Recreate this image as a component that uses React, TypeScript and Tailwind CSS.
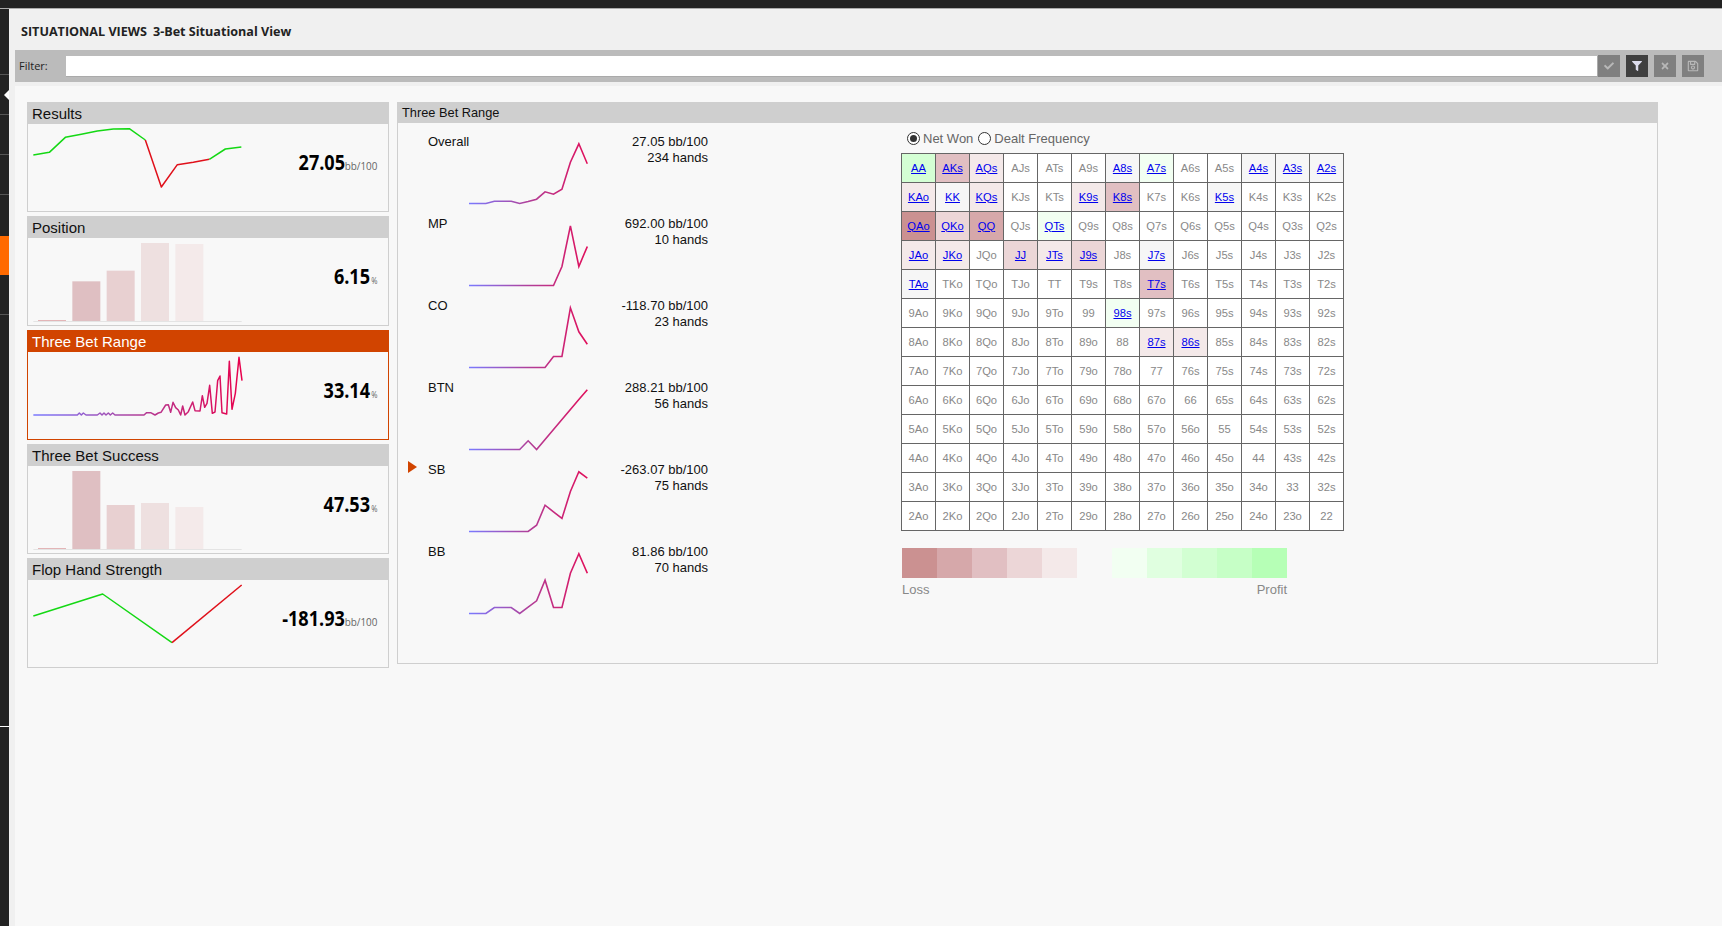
import { FaCheck, FaFilter, FaRegSave, FaTimes } from "react-icons/fa";

type Pt = [number, number];

const RANKS = "AKQJT98765432".split("");

const CELL_BG: Record<string, string> = {
  g3: "bg-[#d4ffd4]",
  g1: "bg-[#f2fff2]",
  n: "bg-[#f6f6f6]",
  r1: "bg-[#f4e9e9]",
  r2: "bg-[#ecd6d7]",
  r3: "bg-[#e1bfc2]",
  r4: "bg-[#d6a8aa]",
  r5: "bg-[#cb9191]",
};

const PLAYED: Record<string, string> = {
  AA: "g3", AKs: "r3", AQs: "r1", A8s: "n", A7s: "g1", A4s: "n", A3s: "n", A2s: "n",
  KAo: "r1", KK: "n", KQs: "r1", K9s: "r1", K8s: "r3", K5s: "n",
  QAo: "r5", QKo: "r2", QQ: "r4", QTs: "g1",
  JAo: "r1", JKo: "r1", JJ: "r2", JTs: "r1", J9s: "r2", J7s: "n",
  TAo: "n", T7s: "r3",
  "98s": "g1", "87s": "r1", "86s": "r1",
};

const LOSS = ["bg-[#cb9191]", "bg-[#d6a8aa]", "bg-[#e1bfc2]", "bg-[#ecd6d7]", "bg-[#f4e9e9]"];
const PROFIT = ["bg-[#f2fff2]", "bg-[#e0ffe0]", "bg-[#d2ffd2]", "bg-[#c6ffc6]", "bg-[#b6ffb6]"];

// card chart points are in 3x pixels, read off the zoomed reference
const RESULTS_UP: Pt[] = [[100, 465], [148, 457], [196, 412], [244, 403], [292, 393], [340, 387], [388, 386], [436, 420]];
const RESULTS_DOWN: Pt[] = [[436, 420], [484, 561], [532, 494], [580, 487], [628, 478]];
const RESULTS_END: Pt[] = [[628, 478], [676, 447], [724, 441]];
const FLOP_UP: Pt[] = [[100, 888], [308, 822], [516, 968]];
const FLOP_DOWN: Pt[] = [[516, 968], [725, 795]];
const RANGE_TREND: Pt[] = [
  [100, 285], [232, 285], [238, 279], [244, 285], [250, 279], [258, 285], [292, 285], [300, 279], [306, 285], [312, 279],
  [318, 285], [325, 279], [331, 285], [338, 279], [345, 285], [432, 285], [440, 278], [452, 278], [465, 285], [475, 279],
  [483, 277], [497, 255], [505, 254], [512, 277], [519, 247], [527, 263], [535, 270], [542, 285], [548, 258], [555, 285],
  [565, 275], [578, 246], [585, 272], [600, 273], [607, 227], [614, 262], [621, 250], [629, 196], [637, 280], [645, 276],
  [653, 182], [660, 168], [666, 278], [680, 282], [688, 124], [696, 268], [706, 220], [717, 112], [726, 182],
];

const BARS_POSITION = [960, 844, 812, 729, 732];
const BARS_SUCCESS = [684, 453, 555, 549, 561];
const BAR_FILL = ["#e3b5b7", "#dfbfc2", "#e8d0d1", "#eee0e0", "#f4eaea"];

const toPoints = (pts: Pt[]) => pts.map(([x, y]) => `${x},${y}`).join(" ");

const ChartBox = ({ top, children }: { top: number; children: React.ReactNode }) => (
  <svg width={222} height={86} viewBox={`84 ${top} 666 258`} className="shrink-0">
    <defs>
      <linearGradient id={`card-grad-${top}`} gradientUnits="userSpaceOnUse" x1="100" x2="725" y1="0" y2="0">
        <stop offset="0" stopColor="#7a7aff" />
        <stop offset="0.5" stopColor="#b0409a" />
        <stop offset="1" stopColor="#e8004c" />
      </linearGradient>
    </defs>
    {children}
  </svg>
);

const Line = ({ pts, color }: { pts: Pt[]; color: string }) => (
  <polyline points={toPoints(pts)} fill="none" stroke={color} strokeWidth={4.5} strokeLinejoin="round" />
);

const Bars = ({ tops, baseline, top }: { tops: number[]; baseline: number; top: number }) => (
  <ChartBox top={top}>
    <rect x={100} y={baseline} width={625} height={3} fill="#e4e4e4" />
    {tops.map((t, i) => (
      <rect key={i} x={114 + i * 103} y={t} width={84} height={baseline - t} fill={BAR_FILL[i]} />
    ))}
  </ChartBox>
);

const Card = ({
  title,
  value,
  unit,
  active,
  chart,
}: {
  title: string;
  value: string;
  unit: string;
  active?: boolean;
  chart: React.ReactNode;
}) => (
  <div className={`h-[110px] border flex flex-col ${active ? "border-[#d14400]" : "border-[#cfcfcf]"}`}>
    <div
      className={`h-[21px] shrink-0 pl-1 text-[15px] leading-[21px] ${active ? "bg-[#d14400] text-white" : "bg-[#cfcfcf] text-[#111]"}`}
    >
      {title}
    </div>
    <div className="flex flex-1 items-start">
      {chart}
      <div className="flex-1 flex justify-end items-baseline pr-[11px] pt-[24px] whitespace-nowrap">
        <span className="font-['Open_Sans'] font-bold text-[21px] leading-[28px] text-black origin-right scale-x-[0.86] inline-block">
          {value}
        </span>
        {unit === "%" ? (
          <span className="font-['Open_Sans'] text-[9px] text-[#666] origin-right scale-x-[0.84] inline-block">%</span>
        ) : (
          <span className="font-['Open_Sans'] text-[11px] text-[#666] origin-right scale-x-[0.9] inline-block -ml-[4px]">{unit}</span>
        )}
      </div>
    </div>
  </div>
);

const SITUATIONS: { label: string; won: string; hands: string; h: number[] }[] = [
  { label: "Overall", won: "27.05", hands: "234", h: [0, 0, 0, 2.3, 2.3, 2.3, 0, 2, 4.3, 11.7, 9.3, 14.3, 41.3, 59.7, 39.7] },
  { label: "MP", won: "692.00", hands: "10", h: [0, 0, 0, 0, 0, 0, 0, 0, 0, 0, 0, 19, 59.7, 19, 39] },
  { label: "CO", won: "-118.70", hands: "23", h: [0, 0, 0, 0, 0, 0, 0, 0, 0, 0, 11, 11, 59.7, 35.7, 23.3] },
  { label: "BTN", won: "288.21", hands: "56", h: [0, 0, 0, 0, 0, 0, 0, 8.7, 0, 10, 20, 30, 40, 50, 59.7] },
  { label: "SB", won: "-263.07", hands: "75", h: [0, 0, 0, 0, 0, 0, 0, 0, 6.3, 26.3, 19.7, 13, 40, 59.7, 53.3] },
  { label: "BB", won: "81.86", hands: "70", h: [0, 0, 0, 6, 6, 6, 0, 6.3, 12.7, 33.3, 6, 6, 40.3, 59.7, 40.3] },
];

const Spark = ({ id, h }: { id: string; h: number[] }) => (
  <svg width={120} height={72} className="shrink-0">
    <defs>
      <linearGradient id={id} gradientUnits="userSpaceOnUse" x1="1" x2="119" y1="0" y2="0">
        <stop offset="0" stopColor="#7a7aff" />
        <stop offset="0.5" stopColor="#b0409a" />
        <stop offset="1" stopColor="#e0105c" />
      </linearGradient>
    </defs>
    <polyline
      points={h.map((v, i) => `${1 + i * 8.45},${70.5 - v}`).join(" ")}
      fill="none"
      stroke={`url(#${id})`}
      strokeWidth={1.6}
    />
  </svg>
);

const SituationRow = ({ row }: { row: (typeof SITUATIONS)[number] }) => (
  <div className="h-[82px] flex text-[13px] leading-4 text-[#111]">
    <div className="w-[30px] shrink-0 pl-[10px]">
      {row.label === "SB" && (
        <svg width={9} height={12} viewBox="0 0 9 12">
          <polygon points="0,0 9,6 0,12" fill="#d14400" />
        </svg>
      )}
    </div>
    <div className="w-[40px] shrink-0 pt-[1px]">{row.label}</div>
    <Spark id={`spark-${row.label}`} h={row.h} />
    <div className="w-[120px] shrink-0 pt-[1px] text-right">
      <div>{row.won} bb/100</div>
      <div>{row.hands} hands</div>
    </div>
  </div>
);

const Radio = ({ checked, label }: { checked?: boolean; label: string }) => (
  <div className="flex items-center gap-[3px]">
    <span className="w-[13px] h-[13px] rounded-full border border-[#333] bg-white flex items-center justify-center">
      {checked && <span className="w-[7px] h-[7px] rounded-full bg-[#333]" />}
    </span>
    <span className="pt-[1px]">{label}</span>
  </div>
);

const HandGrid = () => (
  <table className="border-collapse table-fixed w-[443px] bg-white text-[11.2px]">
    <tbody>
      {RANKS.map((a, i) => (
        <tr key={a}>
          {RANKS.map((b, j) => {
            const hand = i === j ? a + b : a + b + (i < j ? "s" : "o");
            const level = PLAYED[hand];
            return (
              <td key={b} className={`h-[29px] w-[34px] p-0 border border-[#666] text-center ${level ? CELL_BG[level] : ""}`}>
                {level ? <span className="text-[#0000ee] underline">{hand}</span> : <span className="text-[#888]">{hand}</span>}
              </td>
            );
          })}
        </tr>
      ))}
    </tbody>
  </table>
);

const ToolButton = ({ dark, children }: { dark?: boolean; children: React.ReactNode }) => (
  <div className={`w-[22px] h-[22px] flex items-center justify-center ${dark ? "bg-[#404040] text-[#dde]" : "bg-[#808080] text-[#b8b8b8]"}`}>
    {children}
  </div>
);

const App = () => {
  return (
    <div className="h-[926px] w-[1722px] overflow-hidden flex flex-col bg-[#f0f0f0] font-['Liberation_Sans',Arial,sans-serif]">
      <div className="h-[9px] shrink-0 bg-[#222] border-b border-[#aaa]" />
      <div className="flex flex-1 min-h-0">
        <aside className="relative w-[9px] shrink-0 bg-[#222]">
          <div className="h-[66px] border-b border-[#555]" />
          <div className="h-[40px] border-b border-[#555]" />
          <div className="h-[40px] border-b border-[#555]" />
          <div className="h-[40px] border-b border-[#555]" />
          <div className="h-[41px]" />
          <div className="h-[39px] bg-[#ff6a00]" />
          <div className="h-[40px] border-b border-[#555]" />
          <div className="h-[412px] border-b border-white" />
          <div className="absolute left-[4px] top-[81px] w-0 h-0 border-y-[5px] border-y-transparent border-r-[5px] border-r-white" />
        </aside>
        <main className="flex-1 min-w-0 flex flex-col">
          <div className="h-[41px] shrink-0 pl-[12px] pt-[6px] flex items-center gap-[6px] font-['Open_Sans'] font-bold text-[12.6px] text-[#222]">
            <span>SITUATIONAL VIEWS</span>
            <span>3-Bet Situational View</span>
          </div>
          <div className="ml-[6px] h-[32px] shrink-0 bg-[#bbb] flex items-center pl-[4px] font-['Open_Sans'] text-[11px] text-[#222]">
            <span className="w-[47px] pt-[1px]">Filter:</span>
            <div className="w-[1532px] h-[21px] bg-white border-b border-r border-[#aaa]" />
            <div className="flex gap-[6px]">
              <ToolButton><FaCheck size={10} /></ToolButton>
              <ToolButton dark><FaFilter size={10} /></ToolButton>
              <ToolButton><FaTimes size={10} /></ToolButton>
              <ToolButton><FaRegSave size={12} /></ToolButton>
            </div>
          </div>
          <div className="ml-[6px] mt-[4px] flex-1 bg-[#f8f8f8] pl-[12px] pt-[16px] flex items-start gap-[8px]">
            <div className="w-[362px] shrink-0 flex flex-col gap-[4px]">
              <Card
                title="Results"
                value="27.05"
                unit="bb/100"
                chart={
                  <ChartBox top={372}>
                    <Line pts={RESULTS_UP} color="#14d814" />
                    <Line pts={RESULTS_DOWN} color="#e0101a" />
                    <Line pts={RESULTS_END} color="#14d814" />
                  </ChartBox>
                }
              />
              <Card title="Position" value="6.15" unit="%" chart={<Bars tops={BARS_POSITION} baseline={963} top={714} />} />
              <Card
                active
                title="Three Bet Range"
                value="33.14"
                unit="%"
                chart={
                  <ChartBox top={96}>
                    <Line pts={RANGE_TREND} color="url(#card-grad-96)" />
                  </ChartBox>
                }
              />
              <Card title="Three Bet Success" value="47.53" unit="%" chart={<Bars tops={BARS_SUCCESS} baseline={687} top={438} />} />
              <Card
                title="Flop Hand Strength"
                value="-181.93"
                unit="bb/100"
                chart={
                  <ChartBox top={780}>
                    <Line pts={FLOP_UP} color="#14d814" />
                    <Line pts={FLOP_DOWN} color="#e0101a" />
                  </ChartBox>
                }
              />
            </div>
            <section className="w-[1261px] h-[562px] shrink-0 border border-[#cfcfcf] flex flex-col">
              <div className="h-[20px] shrink-0 bg-[#cfcfcf] pl-[4px] text-[12.8px] leading-[20px] text-[#111]">Three Bet Range</div>
              <div className="flex flex-1">
                <div className="pt-[10px] w-[310px] shrink-0">
                  {SITUATIONS.map((row) => (
                    <SituationRow key={row.label} row={row} />
                  ))}
                </div>
                <div className="ml-[193px]">
                  <div className="h-[22px] pt-[8px] pl-[6px] flex gap-[5px] text-[13px] leading-[14px] text-[#666]">
                    <Radio checked label="Net Won" />
                    <Radio label="Dealt Frequency" />
                  </div>
                  <div className="mt-[8px]">
                    <HandGrid />
                  </div>
                  <div className="mt-[17px] ml-[1px] flex">
                    {LOSS.map((c) => (
                      <div key={c} className={`w-[35px] h-[30px] ${c}`} />
                    ))}
                    <div className="w-[35px]" />
                    {PROFIT.map((c) => (
                      <div key={c} className={`w-[35px] h-[30px] ${c}`} />
                    ))}
                  </div>
                  <div className="ml-[1px] mt-[4px] w-[385px] flex justify-between text-[13px] leading-4 text-[#888]">
                    <span>Loss</span>
                    <span>Profit</span>
                  </div>
                </div>
              </div>
            </section>
          </div>
        </main>
      </div>
    </div>
  );
};

export default App;
